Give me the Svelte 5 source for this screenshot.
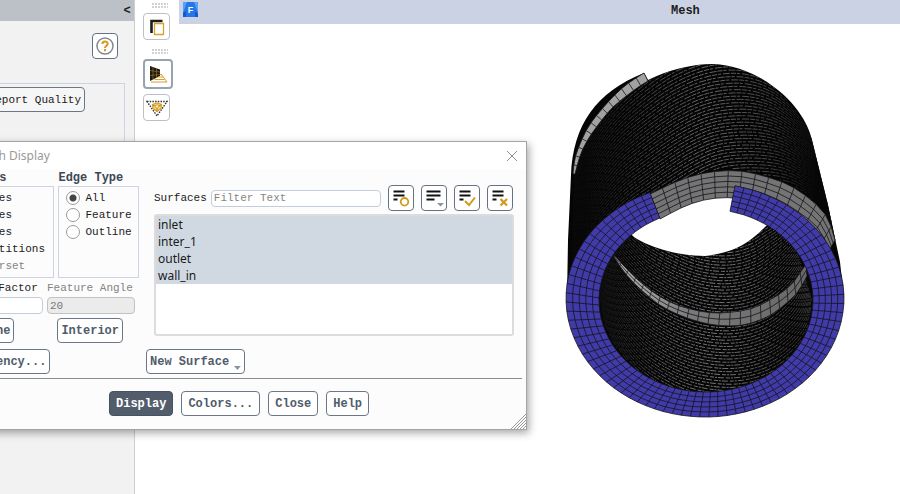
<script>
  let edgeType = $state('All');
  let filter = $state('');
  let shrink = $state('');
  let angle = $state('20');

  const options = ['Nodes', 'Edges', 'Faces', 'Partitions'];
  const edgeTypes = ['All', 'Feature', 'Outline'];
  const surfaces = ['inlet', 'inter_1', 'outlet', 'wall_in'];
  const actions = ['Colors...', 'Close', 'Help'];

  // Walk a smooth curve through the points and return n + 1 evenly spread samples.
  function sample(points, n) {
    const dense = [];
    const last = points.length - 1;
    for (let i = 0; i < last; i++) {
      const a = points[Math.max(i - 1, 0)];
      const b = points[i];
      const c = points[i + 1];
      const d = points[Math.min(i + 2, last)];
      for (let s = 0; s < 12; s++) {
        const t = s / 12;
        dense.push([0, 1].map((k) =>
          0.5 * (2 * b[k] + (c[k] - a[k]) * t +
            (2 * a[k] - 5 * b[k] + 4 * c[k] - d[k]) * t * t +
            (3 * b[k] - a[k] - 3 * c[k] + d[k]) * t * t * t)));
      }
    }
    dense.push(points[last]);
    const len = [0];
    for (let i = 1; i < dense.length; i++) {
      len.push(len[i - 1] + Math.hypot(dense[i][0] - dense[i - 1][0], dense[i][1] - dense[i - 1][1]));
    }
    const out = [];
    let j = 0;
    for (let i = 0; i <= n; i++) {
      const want = (len[len.length - 1] * i) / n;
      while (j < len.length - 2 && len[j + 1] < want) j++;
      const f = (want - len[j]) / (len[j + 1] - len[j] || 1);
      out.push(mix(dense[j], dense[j + 1], f));
    }
    return out;
  }

  const mix = (p, q, t) => [p[0] + (q[0] - p[0]) * t, p[1] + (q[1] - p[1]) * t];
  const line = (pts) => 'M' + pts.map((p) => p[0].toFixed(1) + ' ' + p[1].toFixed(1)).join('L');

  function band(outer, inner, cols, rows) {
    const a = sample(outer, cols);
    const b = sample(inner, cols);
    let grid = '';
    for (let r = 0; r <= rows; r++) grid += line(a.map((p, i) => mix(p, b[i], r / rows)));
    for (let i = 0; i <= cols; i++) grid += line([a[i], b[i]]);
    return { fill: line([...a, ...b.slice().reverse()]) + 'Z', grid };
  }

  // Curves that drift from one boundary towards the other as they run along the surface.
  function layers(from, to, count, drift) {
    const a = sample(from, 60);
    const b = sample(to, 60);
    const out = [];
    for (let k = -Math.ceil(count * drift); k < count; k++) {
      const pts = [];
      a.forEach((p, i) => {
        const t = k / (count - 1) + (drift * i) / 60;
        if (t >= 0 && t <= 1) pts.push(mix(p, b[i], t));
      });
      if (pts.length > 1) out.push(line(pts));
    }
    return out;
  }

  function arc(cx, cy, rx, top, bottom, from, to) {
    return Array.from({ length: 41 }, (_, i) => {
      const t = from + ((to - from) * i) / 40;
      const s = Math.sin(t);
      return [cx + rx * Math.cos(t), cy + (s < 0 ? top : bottom) * s];
    });
  }

  const inlet = band(
    arc(705, 298, 139, 115, 119, -1.353, 4.304),
    arc(706, 300, 107, 91, 92, -1.345, 4.266), 78, 5);

  const outlet = band(
    [[650, 194], [678, 181], [700, 174], [720, 171], [740, 171], [760, 175], [787, 184], [810, 199], [827, 217], [835, 240]],
    [[660, 219], [683, 207], [700, 201], [717, 198], [736, 198], [754, 202], [774, 211], [794, 223], [812, 236], [826, 256]], 16, 5);

  const rim = band(
    [[644, 73], [630, 82], [620, 90], [611, 99], [602, 109], [593, 120], [586, 131], [580, 144], [575, 158], [573, 174]],
    [[648, 81], [637, 88], [625, 97], [614, 106], [605, 116], [595, 129], [587, 141], [580, 156], [575, 174]], 14, 1);

  const seam = band(
    [[614, 255], [624, 266], [637, 279], [653, 292], [670, 302], [690, 309], [717, 313], [750, 309], [773, 298], [790, 286], [800, 273], [806, 264]],
    [[614, 257], [622, 269], [632, 281], [647, 295], [663, 307], [687, 318], [715, 325], [743, 325], [767, 317], [783, 306], [797, 293], [807, 276]], 22, 2);

  const outside = layers(
    [[572, 262], [594, 232], [622, 208], [650, 194], [700, 174], [735, 170], [787, 183], [820, 210], [840, 250]],
    [[574, 170], [586, 137], [612, 103], [648, 80], [680, 68], [713, 64], [745, 70], [775, 88], [803, 120], [812, 140]], 34, 0.6);

  const inside = layers(
    [[602, 215], [618, 228], [634, 237], [650, 246], [680, 254], [705, 256], [730, 251], [750, 240], [766, 225], [785, 210]],
    [[600, 300], [608, 334], [634, 368], [670, 387], [706, 393], [745, 387], [780, 367], [805, 334], [812, 300]], 44, 0.4);
</script>

<div class="app">
  <aside class="panel">
    <header><button class="fold" aria-label="Collapse panel">&lt;</button></header>
    <div class="help-row">
      <button class="icon-btn" aria-label="Help topics">
        <svg viewBox="0 0 20 20" width="20" height="20">
          <circle cx="10" cy="10" r="8" fill="#fff" stroke="#85888c" stroke-width="1.5" />
          <path d="M7.3 8.100c0-3.600 5.400-3.400 5.400-.3 0 1.900-2.700 2-2.700 4.100" fill="none" stroke="#d8981a" stroke-width="2" />
          <path d="M9 13h2v2.200H9z" fill="#d8981a" />
        </svg>
      </button>
    </div>
    <div class="quality"><button class="btn plain">Report Quality</button></div>
  </aside>

  <nav class="tools">
    <i class="grip"></i>
    <button class="tool" aria-label="Copy view">
      <svg viewBox="0 0 20 20" width="20" height="20">
        <path d="M4.500 16V4h11" fill="none" stroke="#1c1c1c" stroke-width="2.600" />
        <path d="M7.500 6.500h9v11h-9z" fill="#fff" stroke="#d9a02c" stroke-width="1.300" />
      </svg>
    </button>
    <i class="grip second"></i>
    <button class="tool active" aria-label="Display mesh">
      <svg viewBox="0 0 20 20" width="20" height="20">
        <path d="M2 2l10 3.500v6.500L2 17z" fill="#1c1a14" />
        <path d="M5 3v12.500M8.500 4v10M2 6.500l10 1.500M2 11.500l10-1" stroke="#a87c20" stroke-width=".6" />
        <path d="M12 10.500h2M10 13h5M6.500 15.500h10M3 18h16M13 10l6 8" fill="none" stroke="#d9a02c" />
      </svg>
    </button>
    <button class="tool" aria-label="Filter cells">
      <svg viewBox="0 0 22 20" width="22" height="20">
        <path d="M1 3.500h20L11 18z" fill="none" stroke="#333" stroke-width="1.400" stroke-dasharray="1.500 1.200" />
        <path d="M6.500 6.500l4.500-1.500 4.500 1.500-.5 4-4 3-4-3z" fill="#f3d48c" stroke="#d9a02c" stroke-width="1.300" />
        <path d="M7 7l4 2 4-2M11 9v4.500" fill="none" stroke="#c48c18" stroke-width="1.200" />
        <circle cx="11" cy="8.500" r="1.600" fill="#fff" stroke="#d9a02c" />
      </svg>
    </button>
  </nav>

  <main class="viewer">
    <header>
      <svg class="logo" viewBox="0 0 15 15" width="15" height="15">
        <path d="M0 0h15v15H0z" fill="#2377ea" />
        <path d="M0 0h4L0 11zM11 0h4v11z" fill="#57a0f4" />
        <path d="M0 11l3-2v6H0zM12 9l3 3v3h-3z" fill="#1558cc" />
        <text x="7.500" y="11" text-anchor="middle">F</text>
      </svg>
      <h1>Mesh</h1>
    </header>
    <svg class="scene" viewBox="179 24 721 470" preserveAspectRatio="xMinYMin meet" role="img" aria-label="Meshed cylinder">
      <defs>
        <linearGradient id="sheen" gradientUnits="userSpaceOnUse" x1="568" y1="0" x2="844" y2="0">
          <stop offset=".06" stop-color="#0a0a0a" />
          <stop offset=".25" stop-color="#3c3c3c" />
          <stop offset=".5" stop-color="#686868" />
          <stop offset=".72" stop-color="#444" />
          <stop offset=".9" stop-color="#080808" />
        </linearGradient>
        <linearGradient id="glow" gradientUnits="userSpaceOnUse" x1="600" y1="0" x2="812" y2="0">
          <stop offset="0" stop-color="#0c0c0c" />
          <stop offset=".3" stop-color="#5a5a5a" />
          <stop offset=".55" stop-color="#787878" />
          <stop offset="1" stop-color="#303030" />
        </linearGradient>
        <linearGradient id="steel" x1="0" y1="0" x2="1" y2="0">
          <stop offset="0" stop-color="#b4b4b4" />
          <stop offset=".4" stop-color="#7a7a7a" />
          <stop offset="1" stop-color="#686868" />
        </linearGradient>
        <clipPath id="body">
          <path d="M567 298L568 240 571 175C573 125 596 92 644 73L648 80C668 70 692 64 713 64C760 66 804 104 812 140L828 205 840 262 844 298z" />
        </clipPath>
        <clipPath id="bore"><ellipse cx="706" cy="300" rx="108" ry="93" /></clipPath>
      </defs>

      <g clip-path="url(#body)">
        <path d="M560 60h290v240H560z" fill="#050505" />
        {#each outside as d, i}
          <path {d} class="wire" stroke="url(#sheen)" stroke-dasharray="5 1 3 2 7 1" stroke-dashoffset={(i * 13) % 19} />
        {/each}
      </g>
      <path d={rim.fill} fill="#a2a2a2" />
      <path d={rim.grid} class="edge" />

      <g clip-path="url(#bore)">
        <path d="M590 200h230v200H590z" fill="#060606" />
        {#each inside as d, i}
          <path {d} class="wire" stroke="url(#glow)" stroke-dasharray="4 1 2 1 6 2" stroke-dashoffset={(i * 11) % 16} />
        {/each}
        <path d={seam.fill} fill="url(#steel)" />
        <path d={seam.grid} class="edge" />
      </g>
      <path d="M622 226L634 237C652 249 682 256 705 256C735 253 751 242 768 224L738 198 717 196 690 202 650 216z" fill="#fff" />
      <path d={outlet.fill} fill="#747474" />
      <path d={outlet.grid} class="edge" />
      <path d={inlet.fill} fill="#403ba8" />
      <path d={inlet.grid} class="edge" />
    </svg>
  </main>

  <section class="dialog" role="dialog" aria-label="Mesh Display">
    <header>
      <h2>Mesh Display</h2>
      <button class="close" aria-label="Close dialog">
        <svg viewBox="0 0 12 12" width="12" height="12"><path d="M1 1l10 10M11 1L1 11" stroke="#8b8b8b" /></svg>
      </button>
    </header>

    <div class="content">
      <div class="left">
        <div class="groups">
          <div class="group options">
            <h3>Options</h3>
            <div class="box">
              {#each options as o}
                <label><input type="checkbox" />{o}</label>
              {/each}
              <label class="off"><input type="checkbox" disabled />Overset</label>
            </div>
          </div>
          <div class="group types">
            <h3>Edge Type</h3>
            <div class="box">
              {#each edgeTypes as t}
                <label><input type="radio" name="edge" value={t} bind:group={edgeType} />{t}</label>
              {/each}
            </div>
          </div>
        </div>
        <div class="numbers">
          <label>Shrink Factor<input type="text" bind:value={shrink} /></label>
          <label class="off">Feature Angle<input type="text" bind:value={angle} disabled /></label>
        </div>
        <div class="pair">
          <button class="btn">Outline</button>
          <button class="btn">Interior</button>
        </div>
        <div><button class="btn">Adjacency...</button></div>
      </div>

      <div class="right">
        <div class="filter">
          <label for="filter">Surfaces</label>
          <input id="filter" type="text" placeholder="Filter Text" bind:value={filter} />
          <button class="icon-btn" aria-label="Toggle tree view">
            <svg viewBox="0 0 24 24" width="24" height="24">
              <path d="M4.500 5.500h11M4.500 9.500h11M4.500 13.500h4" stroke="#111" stroke-width="2" />
              <circle cx="15.500" cy="15.800" r="3.800" fill="none" stroke="#d09a1c" stroke-width="1.800" />
            </svg>
          </button>
          <button class="icon-btn" aria-label="Match options">
            <svg viewBox="0 0 24 24" width="24" height="24">
              <path d="M4.500 5.500h14M4.500 9.500h14M4.500 13.500h8" stroke="#111" stroke-width="2" />
              <path d="M15 17h7l-3.500 3.500z" fill="#8a94a0" />
            </svg>
          </button>
          <button class="icon-btn" aria-label="Select all">
            <svg viewBox="0 0 24 24" width="24" height="24">
              <path d="M4.500 5.500h11M4.500 9.500h11M4.500 13.500h4" stroke="#111" stroke-width="2" />
              <path d="M10 15l4 4 6-7.500" fill="none" stroke="#d09a1c" stroke-width="2" />
            </svg>
          </button>
          <button class="icon-btn" aria-label="Deselect all">
            <svg viewBox="0 0 24 24" width="24" height="24">
              <path d="M4.500 5.500h11M4.500 9.500h11M4.500 13.500h4" stroke="#111" stroke-width="2" />
              <path d="M12.500 13l6.500 6.500M19 13l-6.500 6.500" stroke="#d09a1c" stroke-width="2.200" />
            </svg>
          </button>
        </div>
        <ul class="list" role="listbox" aria-label="Surfaces" aria-multiselectable="true">
          {#each surfaces as s}
            <li role="option" aria-selected="true">{s}</li>
          {/each}
        </ul>
        <button class="btn menu">New Surface
          <svg viewBox="0 0 7 4" width="7" height="4"><path d="M0 0h7L3.500 4z" fill="#8a94a0" /></svg>
        </button>
      </div>
    </div>

    <footer>
      <button class="btn primary">Display</button>
      {#each actions as a}
        <button class="btn">{a}</button>
      {/each}
    </footer>
    <svg class="resize" viewBox="0 0 15 15" width="15" height="15">
      <path d="M0 15L15 0M3 15L15 3M6 15L15 6M9 15l6-6M12 15l3-3" stroke="#999" />
    </svg>
  </section>
</div>

<style>
  :global(body) { margin: 0; }
  * { box-sizing: border-box; }
  .app {
    position: relative;
    display: flex;
    height: 100vh;
    overflow: hidden;
    background: #fff;
    color: #1b1b1b;
    font: 11px/16px 'Liberation Mono', monospace;
  }
  h1, h2, h3, ul { margin: 0; padding: 0; }
  button, input { font: inherit; color: inherit; margin: 0; }
  button { padding: 0; }
  button svg { display: block; }

  .panel {
    flex: none;
    width: 135px;
    background: #f2f2f2;
    border-right: 1px solid #cfcfcf;
  }
  .panel header {
    display: flex;
    justify-content: flex-end;
    height: 21px;
    background: #bcc1c8;
  }
  .fold { width: 14px; border: 0; background: none; font-weight: bold; font-size: 12px; }
  .help-row { display: flex; justify-content: flex-end; padding: 12px 16px 0 0; }
  .quality {
    display: flex;
    justify-content: flex-end;
    height: 240px;
    margin: 24px 9px 0 0;
    padding: 3px 39px 0 0;
    border: solid #cdd3e0;
    border-width: 1px 1px 1px 0;
  }

  .btn {
    height: 25px;
    padding: 0 3px;
    border: 1px solid #6b7786;
    border-radius: 4px;
    background: #fff;
    color: #505c6b;
    font-weight: bold;
    font-size: 12px;
    white-space: nowrap;
  }
  .btn.plain { flex: none; background: #f6f6f6; color: #1b1b1b; font-weight: normal; font-size: 11px; }
  .btn.primary { background: #525d6c; border-color: #47515f; color: #fff; }
  .icon-btn {
    display: flex;
    flex: none;
    align-items: center;
    justify-content: center;
    width: 26px;
    height: 26px;
    border: 1px solid #667284;
    border-radius: 4px;
    background: #fff;
  }

  .tools {
    display: flex;
    flex: none;
    flex-direction: column;
    align-items: flex-start;
    width: 44px;
    padding: 3px 0 0 8px;
  }
  .grip {
    width: 16px;
    height: 5px;
    margin: 0 0 5px 9px;
    background: radial-gradient(circle at 1px 1px, #d2d2d2 1px, transparent 1px) 0 0 / 3px 3px;
  }
  .grip.second { margin-top: 9px; }
  .tool {
    display: flex;
    align-items: center;
    justify-content: center;
    width: 27px;
    height: 27px;
    border: 1px solid #b9c0c8;
    border-radius: 4px;
    background: #fff;
  }
  .tool.active { width: 30px; height: 30px; margin: 0 0 5px; border: 2px solid #97a3af; }
  .grip.second { margin-bottom: 5px; }

  .viewer { flex: 1; min-width: 0; }
  .viewer header { display: flex; height: 24px; padding: 2px 4px; background: #cbd2e4; }
  .logo { flex: none; }
  .logo text { font: bold 9px 'Liberation Sans', sans-serif; fill: #fff; }
  h1 { margin: 1px 0 0 473px; font-size: 12px; line-height: 16px; }
  .scene { display: block; width: 100%; height: auto; }
  .wire { fill: none; stroke-width: 1; }
  .edge { fill: none; stroke: #14141c; stroke-width: 0.8; }

  .dialog {
    position: absolute;
    top: 141px;
    left: -56px;
    width: 583px;
    background: #fcfcfc;
    border: 1px solid #a4a4a4;
    box-shadow: 2px 3px 8px rgba(0, 0, 0, 0.35);
  }
  .dialog header {
    display: flex;
    align-items: center;
    justify-content: space-between;
    height: 27px;
    padding: 0 8px 0 30px;
    background: #fff;
  }
  h2 { color: #9a9a9a; font: 12px/16px 'Noto Sans', sans-serif; }
  .close { border: 0; background: none; }
  .content {
    display: flex;
    gap: 7px;
    margin-right: 4px;
    padding: 2px 8px 4px 7px;
    border-bottom: 1px solid #8b8b8b;
  }
  .left { flex: none; width: 187px; }
  .left > div:last-child { padding: 6px 0 0 4px; }
  .groups { display: flex; gap: 4px; }
  h3 { color: #3c4856; font-size: 12px; line-height: 15px; }
  .options { width: 103px; }
  .options h3 { padding-left: 4px; }
  .types { width: 81px; }
  .box { height: 92px; padding: 2px 0 0 7px; border: 1px solid #cdd3e3; }
  .box label { display: flex; align-items: center; gap: 5px; height: 17px; }
  .box input {
    appearance: none;
    width: 14px;
    height: 14px;
    border: 1px solid #9b9b9b;
    background: #fff;
  }
  .box input[type='radio'] { border-radius: 50%; }
  .box input:checked { background: radial-gradient(circle, #444 3px, #fff 4px); }
  .off { color: #838383; }
  .numbers { display: flex; gap: 4px; padding-top: 2px; }
  .numbers label { width: 88px; white-space: nowrap; }
  .numbers label:first-child { width: 91px; }
  input[type='text'] {
    display: block;
    width: 100%;
    height: 17px;
    padding: 0 2px;
    border: 1px solid #c3cedb;
    border-radius: 4px;
    background: #fff;
  }
  .numbers input { margin-top: 1px; }
  .numbers input:disabled { background: #ebebeb; border-color: #c2c2c2; color: #777; }
  .pair { display: flex; justify-content: space-between; padding: 4px 16px 0 4px; }

  .right { flex: 1; min-width: 0; padding-top: 14px; }
  .filter { display: flex; align-items: center; gap: 7px; padding: 0 1px 0 8px; }
  .filter label { margin-right: -3px; }
  .filter input[type='text'] { flex: 1; width: 0; }
  .filter input::placeholder { color: #858585; opacity: 1; }
  .list {
    height: 122px;
    margin: 3px 0 13px 8px;
    padding-top: 0;
    border: 2px solid #dcdcdc;
    border-radius: 3px;
    background: #fff;
    color: #1a1a1a;
    font: 12px/17px 'Noto Sans', sans-serif;
    list-style: none;
  }
  .list li { height: 17px; padding-left: 2px; background: #d0d9e2; }
  .menu { display: flex; align-items: center; gap: 5px; width: 99px; }
  .menu svg { margin-top: 12px; }

  .dialog footer { display: flex; gap: 8px; padding: 12px 0 13px 164px; }
  .dialog footer .btn { padding: 0 6px; }
  .resize { position: absolute; right: 0; bottom: 0; }
</style>
